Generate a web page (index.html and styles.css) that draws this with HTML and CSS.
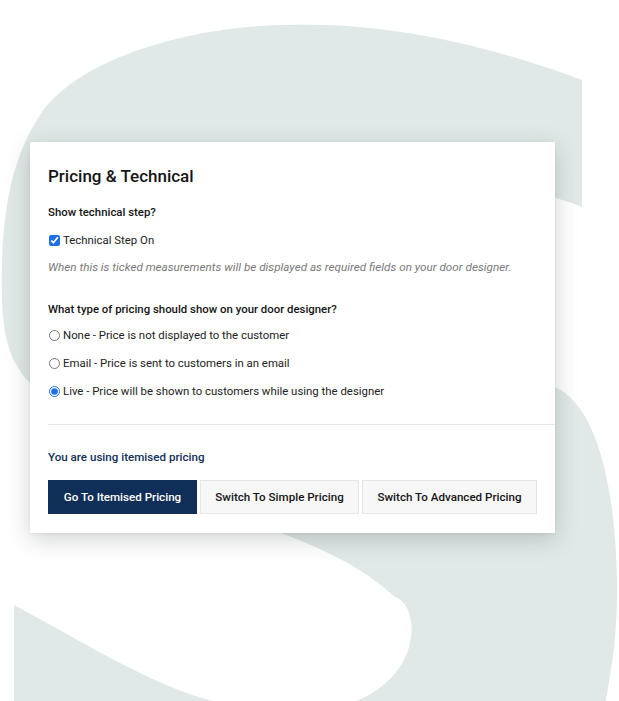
FILE: index.html
```html
<!DOCTYPE html>
<html lang="en">
<head>
<meta charset="utf-8">
<title>Pricing &amp; Technical</title>
<link rel="stylesheet" href="styles.css">
</head>
<body>
<div class="stage">
  <svg class="bg-s" width="619" height="701" viewBox="0 0 619 701" aria-hidden="true">
    <path d="M582 80 L582 207 C480 165 200 150 200 260 C200 330 420 340 520 372 C540 378 550 382 555 387 C595 405 615 480 617 580 C618 640 610 680 600 730 L14 730 L14 605 C80 640 150 685 213 701 C260 728 330 730 356 701 C385 690 408 665 411 637 C414 615 405 600 395 597 C360 565 320 548 281 533 C200 500 60 420 30 383 C12 365 3 340 2 300 C0 220 10 160 40 115 C80 55 200 25 290 25 C400 22 500 50 582 80 Z" fill="#e0e9e7"/>
  </svg>

  <section class="card">
    <h1 class="card-title">Pricing &amp; Technical</h1>

    <p class="label">Show technical step?</p>
    <label class="option option-check">
      <input type="checkbox" class="check" checked>
      <span>Technical Step On</span>
    </label>
    <p class="hint">When this is ticked measurements will be displayed as required fields on your door designer.</p>

    <p class="label label-pricing">What type of pricing should show on your door designer?</p>
    <div class="radios">
      <label class="option">
        <input type="radio" name="pricing" class="radio">
        <span>None - Price is not displayed to the customer</span>
      </label>
      <label class="option">
        <input type="radio" name="pricing" class="radio">
        <span>Email - Price is sent to customers in an email</span>
      </label>
      <label class="option">
        <input type="radio" name="pricing" class="radio" checked>
        <span>Live - Price will be shown to customers while using the designer</span>
      </label>
    </div>

    <hr class="divider">

    <p class="status">You are using itemised pricing</p>
    <div class="actions">
      <button class="btn btn-primary" type="button">Go To Itemised Pricing</button>
      <button class="btn btn-simple" type="button">Switch To Simple Pricing</button>
      <button class="btn btn-advanced" type="button">Switch To Advanced Pricing</button>
    </div>
  </section>
</div>
</body>
</html>
```

FILE: styles.css
```css
* { box-sizing: border-box; }

html, body {
  margin: 0;
  padding: 0;
  background: #ffffff;
}

body {
  font-family: Roboto, "Liberation Sans", Arial, sans-serif;
  color: #222222;
  font-size: 11.4px;
}

.stage {
  position: relative;
  width: 619px;
  height: 701px;
  overflow: hidden;
  padding: 142px 0 0 30px;
}

.bg-s {
  position: absolute;
  left: 0;
  top: 0;
  z-index: 0;
}

.card {
  position: relative;
  z-index: 1;
  width: 525px;
  height: 391px;
  background: #ffffff;
  padding: 24px 18px 0 18px;
  box-shadow: 0 6px 22px rgba(40, 50, 50, 0.22), 0 1px 3px rgba(0, 0, 0, 0.06);
}

.card-title {
  margin: 0;
  font-size: 17px;
  line-height: 20px;
  font-weight: 500;
  color: #151515;
}

.label {
  margin: 18px 0 0;
  font-size: 11.4px;
  line-height: 16px;
  font-weight: 500;
  color: #151515;
}

.label-pricing {
  margin-top: 26px;
}

.option {
  display: flex;
  align-items: center;
  height: 16px;
  line-height: 16px;
  font-size: 11.4px;
  color: #222222;
  gap: 3px;
}

.option-check {
  margin-top: 12px;
}

.check,
.radio {
  width: 11px;
  height: 11px;
  margin: 0 0 0 1px;
  accent-color: #1f6fea;
}

.hint {
  margin: 11px 0 0;
  font-size: 11.7px;
  line-height: 16px;
  font-style: italic;
  color: #7a7a7a;
}

.radios {
  margin-top: 10px;
  display: flex;
  flex-direction: column;
  gap: 12px;
}

.divider {
  margin: 25px -18px 0 0;
  border: 0;
  height: 1px;
  background: #e5e8e8;
}

.status {
  margin: 24px 0 0;
  font-size: 11.6px;
  line-height: 16px;
  font-weight: 500;
  color: #12305a;
}

.actions {
  margin-top: 15px;
  display: flex;
  gap: 3px;
}

.btn {
  flex: none;
  height: 34px;
  padding: 0;
  white-space: nowrap;
  text-align: center;
  font-family: Roboto, "Liberation Sans", Arial, sans-serif;
  font-size: 11.6px;
  font-weight: 500;
  color: #151515;
  background: #f7f7f7;
  border: 1px solid #e6e6e6;
  border-radius: 0;
}

.btn-primary {
  width: 149px;
  background: #0f2e58;
  border-color: #0f2e58;
  color: #ffffff;
}

.btn-simple { width: 159px; }

.btn-advanced { width: 175px; }
```
